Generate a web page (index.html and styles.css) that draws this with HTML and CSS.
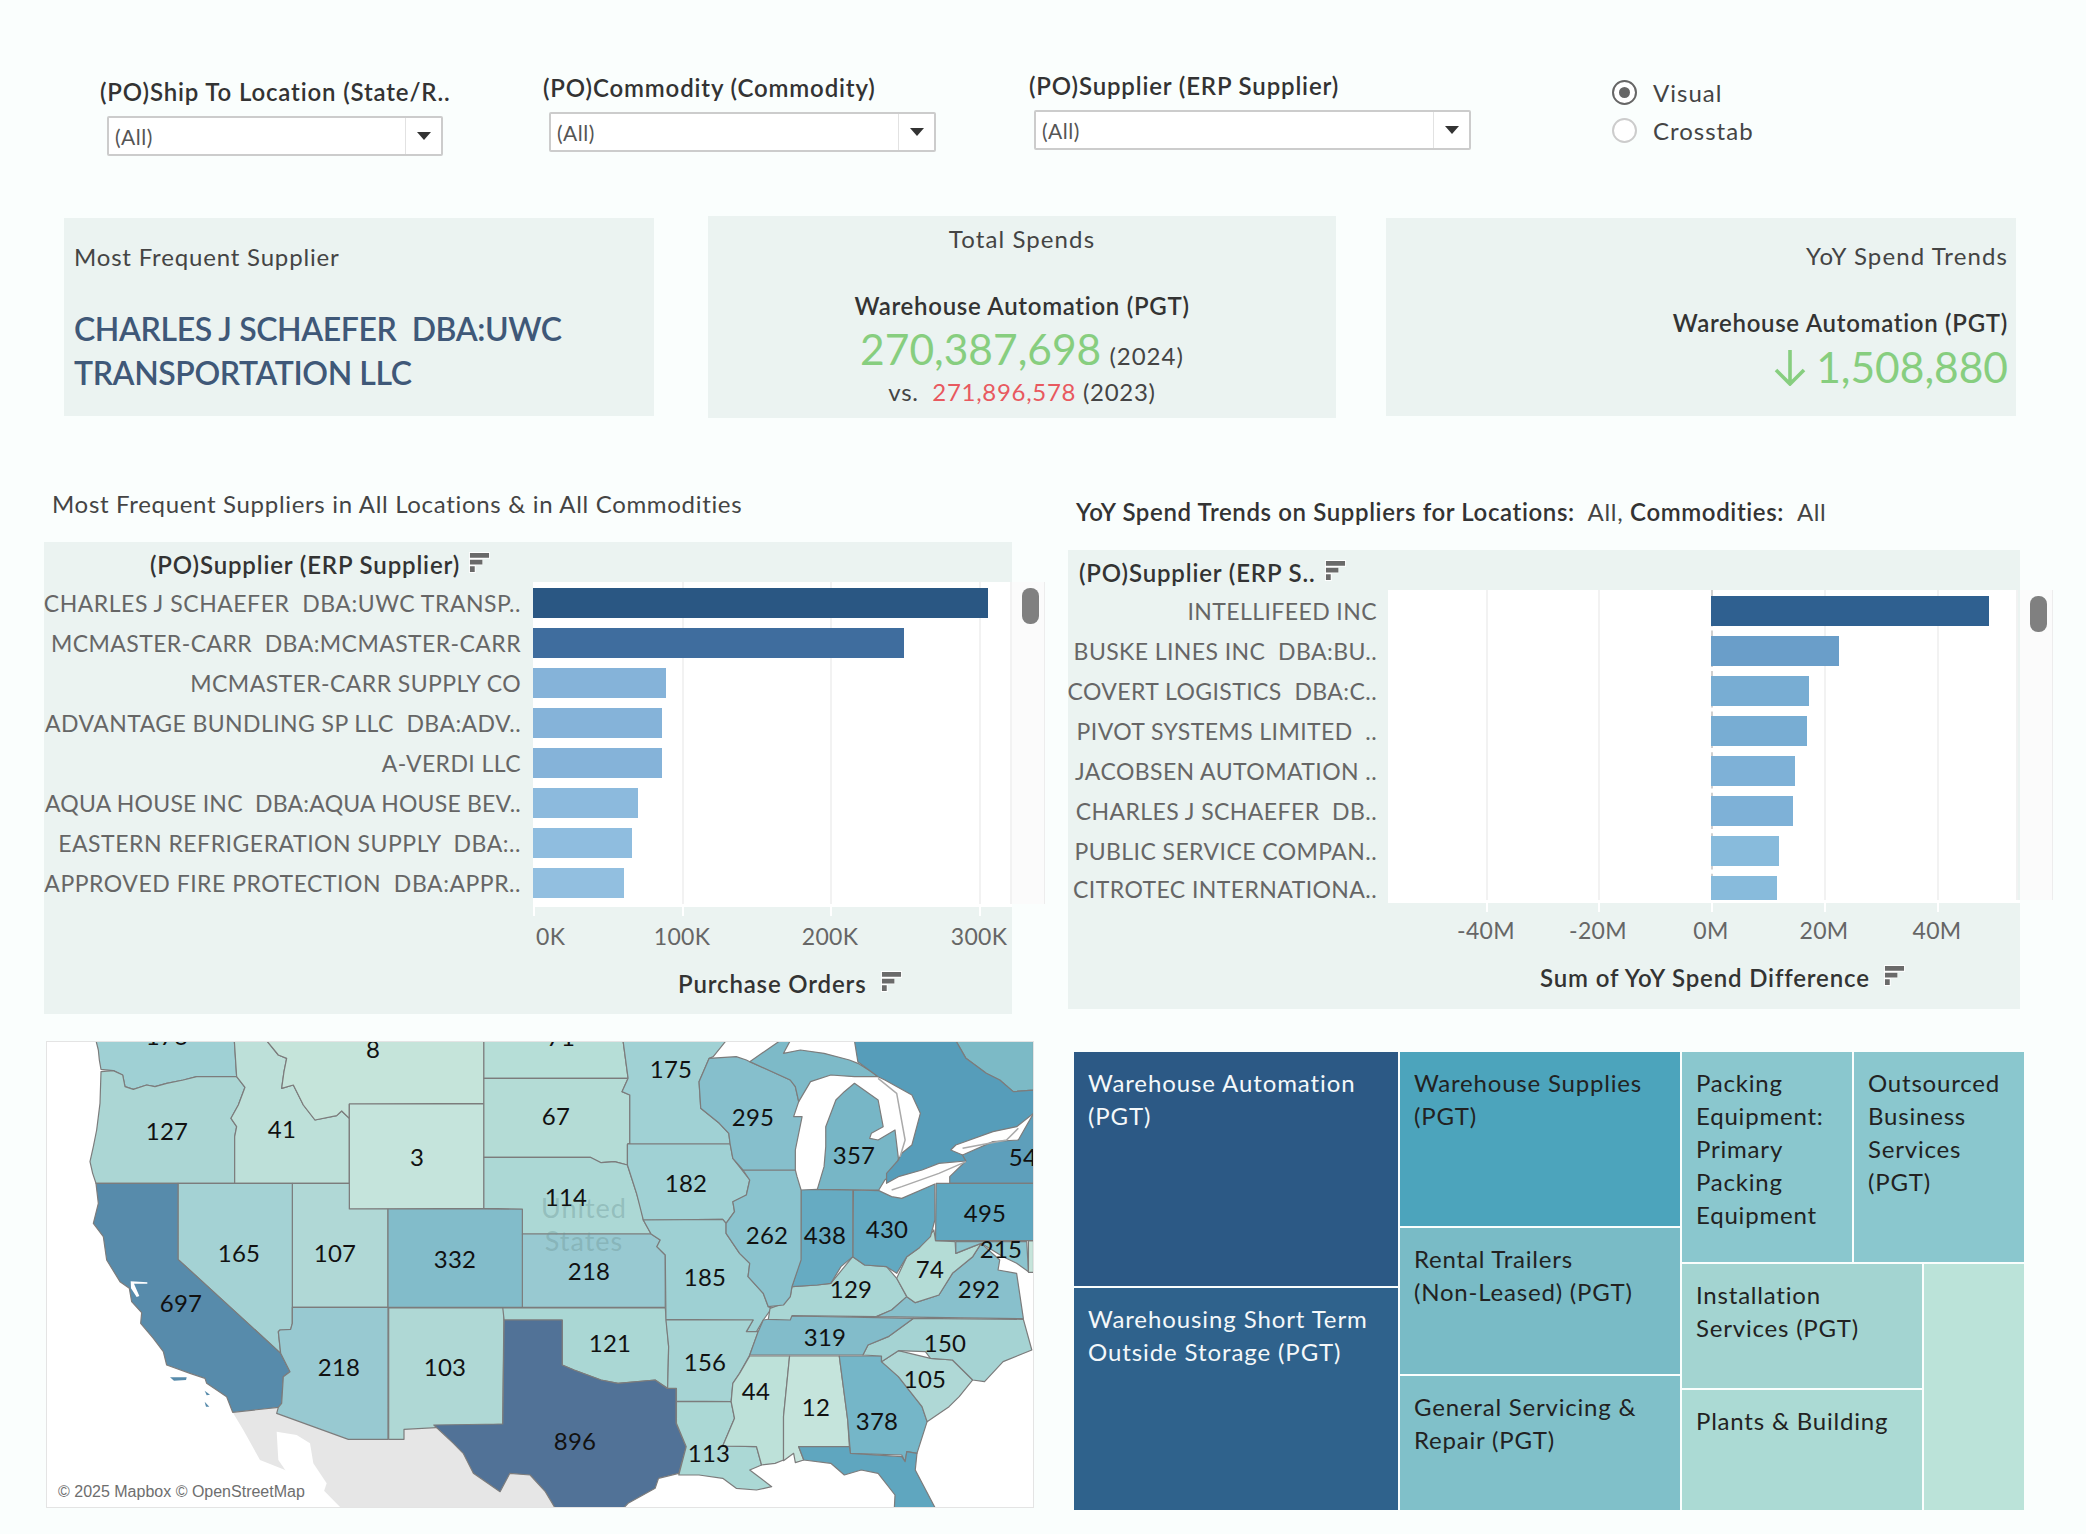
FILE: index.html
```html
<!DOCTYPE html>
<html lang="en">
<head>
<meta charset="utf-8">
<title>Purchase Order Dashboard</title>
<link rel="stylesheet" href="styles.css">
</head>
<body>
<div class="dash">
  <header class="filters">
    <div class="filter f-state">
      <div class="filter-label">(PO)Ship To Location (State/R..</div>
      <div class="select"><span class="select-value">(All)</span><span class="select-btn"><i class="caret"></i></span></div>
    </div>
    <div class="filter f-commodity">
      <div class="filter-label">(PO)Commodity (Commodity)</div>
      <div class="select"><span class="select-value">(All)</span><span class="select-btn"><i class="caret"></i></span></div>
    </div>
    <div class="filter f-supplier">
      <div class="filter-label">(PO)Supplier (ERP Supplier)</div>
      <div class="select"><span class="select-value">(All)</span><span class="select-btn"><i class="caret"></i></span></div>
    </div>
    <div class="radios">
      <div class="radio"><i class="dot on"></i><span>Visual</span></div>
      <div class="radio"><i class="dot"></i><span>Crosstab</span></div>
    </div>
  </header>

  <section class="kpis">
    <div class="kpi kpi-supplier">
      <div class="kpi-title">Most Frequent Supplier</div>
      <div class="supplier-name">CHARLES J SCHAEFER&nbsp; DBA:UWC<br>TRANSPORTATION LLC</div>
    </div>
    <div class="kpi kpi-total">
      <div class="kpi-title">Total Spends</div>
      <div class="kpi-sub">Warehouse Automation (PGT)</div>
      <div class="kpi-line"><span class="big">270,387,698</span> <span class="year">(2024)</span></div>
      <div class="kpi-vs">vs.&nbsp; <span class="red">271,896,578</span> (2023)</div>
    </div>
    <div class="kpi kpi-yoy">
      <div class="kpi-title">YoY Spend Trends</div>
      <div class="kpi-sub">Warehouse Automation (PGT)</div>
      <div class="kpi-line">
        <svg class="down" viewBox="0 0 32 37" aria-hidden="true"><path d="M16 1V35M2 21L16 35L30 21" fill="none" stroke="#87CE7F" stroke-width="3.6"/></svg>
        <span class="big">1,508,880</span>
      </div>
    </div>
  </section>

  <main class="board">
    <div class="col col-left">
      <h2 class="sheet-title title-left">Most Frequent Suppliers in All Locations &amp; in All Commodities</h2>
      <section class="chart chart-left">
        <div class="chart-head">
          <span class="field">(PO)Supplier (ERP Supplier)</span>
          <svg class="sort" viewBox="0 0 22 22" aria-hidden="true"><path d="M0 0H22V7H14V14H7V22H0Z" fill="#fff"/><path d="M1 1H21V6H1ZM1 8H14V13H1ZM1 15H6V21H1Z" fill="#6a6a6a"/></svg>
        </div>
        <div class="chart-body">
          <ul class="labels">
            <li class="wide">CHARLES J SCHAEFER&nbsp; DBA:UWC TRANSP..</li>
            <li>MCMASTER-CARR&nbsp; DBA:MCMASTER-CARR</li>
            <li>MCMASTER-CARR SUPPLY CO</li>
            <li>ADVANTAGE BUNDLING SP LLC&nbsp; DBA:ADV..</li>
            <li>A-VERDI LLC</li>
            <li class="tight">AQUA HOUSE INC&nbsp; DBA:AQUA HOUSE BEV..</li>
            <li class="wide">EASTERN REFRIGERATION SUPPLY&nbsp; DBA:..</li>
            <li class="wide">APPROVED FIRE PROTECTION&nbsp; DBA:APPR..</li>
          </ul>
          <div class="plot">
            <i class="grid" style="left:149px"></i><i class="grid" style="left:297px"></i><i class="grid" style="left:446px"></i><i class="grid edge"></i>
            <div class="bar" style="width:455px;background:#2A5783"></div>
            <div class="bar" style="width:371px;background:#3F6D9E"></div>
            <div class="bar" style="width:133px;background:#85B3D9"></div>
            <div class="bar" style="width:129px;background:#85B3D9"></div>
            <div class="bar" style="width:129px;background:#85B3D9"></div>
            <div class="bar" style="width:105px;background:#8CBADD"></div>
            <div class="bar" style="width:99px;background:#8FBDDF"></div>
            <div class="bar" style="width:91px;background:#92BFE0"></div>
          </div>
          <div class="scroll"><i class="thumb"></i></div>
        </div>
        <div class="axis">
          <i class="tick-mark" style="left:0"></i><i class="tick-mark" style="left:149px"></i><i class="tick-mark" style="left:297px"></i><i class="tick-mark" style="left:446px"></i>
          <span class="tick first">0K</span><span class="tick" style="left:149px">100K</span><span class="tick" style="left:297px">200K</span><span class="tick" style="left:446px">300K</span>
        </div>
        <div class="axis-title">
          <span class="field">Purchase Orders</span>
          <svg class="sort" viewBox="0 0 22 22" aria-hidden="true"><path d="M0 0H22V7H14V14H7V22H0Z" fill="#fff"/><path d="M1 1H21V6H1ZM1 8H14V13H1ZM1 15H6V21H1Z" fill="#6a6a6a"/></svg>
        </div>
      </section>

      <div class="map">
        <svg class="map-svg" viewBox="47 1042 986 465" aria-label="Map of the United States">
          <g class="west" transform="translate(30 1030) scale(.33333)">
            <polygon class="land" points="608,1147 745,1132 740,1150 955,1228 1122,1228 1122,1198 1212,1185 1576,1185 1576,1436 935,1436 880,1380 790,1330 690,1290 640,1200"/>
            <polygon class="gulf" points="740,1205 800,1215 840,1240 850,1300 890,1360 880,1390 935,1436 900,1436 800,1370 745,1290"/>
            <polygon fill="#9FD0D4" points="198,32 613,32 620,140 500,140 460,150 410,160 375,170 350,165 310,178 285,170 278,135 250,122 213,118 208,90 205,60"/>
            <polygon fill="#ABD6D4" points="213,125 250,122 278,135 285,170 310,178 350,165 375,170 410,160 460,150 500,140 620,140 645,172 625,225 603,265 620,290 614,320 614,460 198,460 188,430 180,395 190,350 200,300 210,220"/>
            <polygon fill="#BDE0D9" points="613,32 710,32 745,75 770,85 762,125 755,175 790,165 820,225 855,270 920,257 935,243 958,265 958,460 614,460 614,320 620,290 603,265 625,225 645,172 620,140"/>
            <polygon fill="#C5E4DA" points="710,32 1362,32 1362,220 958,222 958,265 935,243 920,257 855,270 820,225 790,165 755,175 762,125 770,85 745,75"/>
            <polygon fill="#C5E4DC" points="958,222 1362,222 1362,535 958,537"/>
            <polygon fill="#B0D8D6" points="787,460 958,460 958,537 1074,537 1074,832 787,832"/>
            <polygon fill="#A4D2D4" points="444,460 787,460 787,880 782,898 750,900 745,905 752,970 444,688"/>
            <polygon fill="#578BAB" points="198,460 444,460 444,688 752,970 780,1025 760,1040 755,1120 745,1132 608,1147 590,1100 530,1060 525,1045 480,1030 410,1005 400,965 370,925 332,880 335,848 305,815 298,775 270,755 230,690 220,620 190,580 205,520"/>
            <polygon class="gulf" points="302,754 352,757 352,761 312,761 328,798 320,801 303,775"/>
            <polygon class="isle" points="420,1042 470,1042 468,1050 432,1052"/>
            <polygon class="isle" points="524,1082 540,1094 530,1096"/>
            <polygon class="isle" points="524,1115 538,1130 528,1130"/>
            <polygon fill="#98C9D1" points="787,832 1074,832 1074,1228 955,1228 740,1150 745,1132 755,1120 760,1040 780,1025 752,970 745,905 750,900 782,898 787,880"/>
            <polygon fill="#AFD8D5" points="1076,834 1422,834 1418,1182 1122,1198 1122,1228 1076,1228"/>
            <polygon fill="#82BCCA" points="1074,537 1478,537 1478,832 1074,832"/>
          </g>
          <g class="east" transform="translate(520 1030) scale(.33784 .33333)">
            <polygon fill="#B6DED7" points="-107,32 305,32 320,145 -107,145"/>
            <polygon fill="#B4DCD6" points="-107,145 320,145 302,185 325,195 325,340 318,345 318,405 280,395 240,398 208,382 -107,382"/>
            <polygon fill="#ACD8D5" points="-107,382 208,382 240,398 280,395 318,405 345,490 360,540 365,570 388,612 7,612 7,537 -107,535"/>
            <polygon fill="#98C9D1" points="7,612 388,612 415,630 405,650 430,675 430,832 7,832"/>
            <polygon fill="#AAD7D4" points="-51,834 430,834 440,950 437,1075 400,1050 290,1060 240,1050 160,1020 125,1005 125,870 -47,870"/>
            <polygon fill="#517297" points="-47,870 125,870 125,1005 160,1020 240,1050 290,1060 400,1050 435,1075 462,1075 462,1180 492,1250 470,1330 410,1345 400,1375 320,1420 305,1436 105,1436 75,1385 30,1335 -30,1330 -59,1385 -138,1330 -168,1270 -197,1240 -255,1185 -51,1182"/>
            <polygon fill="#A0D1D4" points="305,32 610,32 572,80 560,85 530,155 535,235 590,280 618,310 622,342 318,342 325,340 325,195 302,185 320,145"/>
            <polygon fill="#A0D1D4" points="318,342 622,342 630,385 680,450 670,495 630,515 635,545 610,580 600,568 365,570 345,490 318,405"/>
            <polygon fill="#9ED0D3" points="365,570 600,568 610,580 610,610 650,670 680,700 675,740 720,790 735,830 745,835 720,870 700,905 670,905 690,870 432,868 430,675 405,650 415,630 388,612"/>
            <polygon fill="#A6D4D4" points="432,870 690,870 670,905 705,905 680,975 650,1030 630,1060 625,1115 463,1113 463,1075 437,1075 440,950"/>
            <polygon fill="#ABD8D5" points="463,1115 625,1115 635,1165 600,1248 700,1250 715,1305 680,1320 745,1370 700,1380 640,1375 600,1345 530,1335 470,1335 492,1250 463,1180"/>
            <polygon fill="#BDE1D9" points="680,978 798,978 780,1160 780,1290 755,1300 715,1305 700,1250 600,1248 635,1165 625,1115 630,1060 650,1030"/>
            <polygon fill="#C5E4DC" points="798,978 945,978 970,1170 975,1250 825,1250 840,1290 815,1298 810,1270 780,1292 780,1160"/>
            <polygon fill="#75B6C8" points="945,978 1070,978 1070,995 1120,1040 1190,1130 1205,1175 1175,1270 1145,1265 1140,1295 1130,1275 978,1270 970,1170"/>
            <polygon fill="#5FA6BF" points="825,1250 975,1250 978,1270 1130,1280 1140,1295 1145,1265 1175,1270 1170,1320 1230,1436 1108,1436 1110,1395 1060,1330 1010,1320 960,1335 920,1300 840,1290"/>
            <polygon fill="#AFD8D6" points="1070,995 1120,962 1215,985 1280,990 1340,1050 1300,1100 1270,1130 1205,1175 1190,1130 1120,1040"/>
            <polygon fill="#A5D3D3" points="1015,975 1030,945 1090,920 1165,865 1490,868 1515,960 1430,995 1375,1055 1340,1050 1280,990 1215,985 1200,965 1120,962 1070,995 1070,978"/>
            <polygon fill="#82BCCA" points="720,870 805,858 1165,865 1090,920 1030,945 1015,975 680,975 705,905"/>
            <polygon fill="#A9D6D4" points="740,835 780,820 800,800 805,770 880,765 920,760 985,680 1020,705 1085,710 1115,745 1145,800 1100,840 1055,860 805,857 800,870 735,868"/>
            <polygon fill="#88C0CC" points="1055,860 1100,840 1145,800 1170,818 1240,795 1280,730 1340,680 1365,640 1420,690 1415,720 1470,730 1490,866"/>
            <polygon fill="#B4DCD6" points="1115,745 1145,680 1180,655 1225,600 1230,632 1288,635 1290,670 1340,650 1365,640 1340,680 1280,730 1240,795 1170,818 1145,800"/>
            <polygon fill="#8CC4CE" points="1290,635 1500,635 1505,725 1470,700 1430,680 1365,640 1340,650 1290,670"/>
            <polygon fill="#C5E4DA" points="1505,632 1520,632 1520,727 1505,727"/>
            <polygon fill="#62A9C1" points="987,480 1062,482 1100,500 1130,505 1228,462 1228,570 1215,620 1180,655 1145,680 1115,730 1085,710 1020,705 985,680"/>
            <polygon fill="#66ABC2" points="832,480 880,478 985,480 985,680 950,710 920,760 880,765 805,770 830,690 832,560"/>
            <polygon fill="#8AC3CE" points="660,420 815,420 820,440 832,480 832,690 805,770 800,800 780,825 735,830 720,790 675,740 680,700 650,670 610,610 610,580 635,545 630,515 670,495 680,450"/>
            <polygon fill="#86BFCC" points="560,85 640,80 670,90 680,95 800,150 815,170 825,215 810,260 835,260 815,360 815,420 660,420 630,385 622,342 618,310 590,280 535,235 530,155"/>
            <polygon fill="#7DBAC8" points="680,95 770,32 800,32 780,70 830,60 900,70 975,90 1000,100 1040,125 1060,140 990,140 920,135 860,155 825,215 815,170 800,150"/>
            <polygon fill="#77B6C6" points="905,290 935,210 960,185 990,160 1060,210 1075,290 1040,310 1035,325 1060,330 1110,300 1120,385 1115,420 1080,450 1062,480 880,478 900,410 905,350"/>
            <polygon fill="#7CBAC6" points="1290,32 1520,32 1520,180 1460,185 1420,150 1380,130 1320,85"/>
            <polygon fill="#569DBA" points="990,32 1290,32 1320,85 1380,130 1420,150 1460,185 1520,180 1520,250 1470,290 1400,305 1290,345 1275,360 1310,375 1320,393 1240,400 1190,420 1120,440 1085,460 1085,430 1120,390 1130,370 1160,345 1185,250 1160,195 1080,150 1060,140 1040,125 1000,95"/>
            <polygon fill="#5E9FBB" points="1320,393 1310,375 1400,335 1475,330 1520,250 1520,460 1272,460 1272,440"/>
            <polygon fill="#5FA7C0" points="1232,460 1272,460 1520,460 1520,632 1230,632"/>
            <polyline class="lake-line" points="1060,145 1115,190 1140,330 1125,380"/>
            <polyline class="lake-line" points="1320,395 1240,430 1130,470 1100,480"/>
            <polyline class="lake-line" points="1310,355 1440,330 1475,295"/>
          </g>
          <g class="country">
            <text x="584" y="1218">United</text>
            <text x="584" y="1251">States</text>
          </g>
          <g class="state-values" transform="translate(0 1)">
            <text x="167" y="1044">176</text><text x="373" y="1057">8</text><text x="561" y="1045">71</text>
            <text x="167" y="1139">127</text><text x="282" y="1137">41</text><text x="417" y="1165">3</text>
            <text x="239" y="1261">165</text><text x="335" y="1261">107</text><text x="455" y="1267">332</text>
            <text x="181" y="1311">697</text><text x="339" y="1375">218</text><text x="445" y="1375">103</text>
            <text x="671" y="1077">175</text><text x="556" y="1124">67</text><text x="753" y="1125">295</text>
            <text x="854" y="1163">357</text><text x="1023" y="1165">54</text><text x="686" y="1191">182</text>
            <text x="566" y="1205">114</text><text x="985" y="1221">495</text><text x="887" y="1237">430</text>
            <text x="767" y="1243">262</text><text x="825" y="1243">438</text><text x="1001" y="1257">215</text>
            <text x="589" y="1279">218</text><text x="930" y="1277">74</text><text x="705" y="1285">185</text>
            <text x="851" y="1297">129</text><text x="979" y="1297">292</text><text x="825" y="1345">319</text>
            <text x="610" y="1351">121</text><text x="945" y="1351">150</text><text x="705" y="1370">156</text>
            <text x="925" y="1387">105</text><text x="756" y="1399">44</text><text x="816" y="1415">12</text>
            <text x="877" y="1429">378</text><text x="575" y="1449">896</text><text x="709" y="1461">113</text>
          </g>
        </svg>
        <div class="attribution">© 2025 Mapbox © OpenStreetMap</div>
      </div>
    </div>

    <div class="col col-right">
      <h2 class="sheet-title title-right"><b>YoY Spend Trends on Suppliers for Locations:</b>&nbsp; All, <b>Commodities:</b>&nbsp; All</h2>
      <section class="chart chart-right">
        <div class="chart-head">
          <span class="field">(PO)Supplier (ERP S..</span>
          <svg class="sort" viewBox="0 0 22 22" aria-hidden="true"><path d="M0 0H22V7H14V14H7V22H0Z" fill="#fff"/><path d="M1 1H21V6H1ZM1 8H14V13H1ZM1 15H6V21H1Z" fill="#6a6a6a"/></svg>
        </div>
        <div class="chart-body">
          <ul class="labels">
            <li>INTELLIFEED INC</li>
            <li>BUSKE LINES INC&nbsp; DBA:BU..</li>
            <li>COVERT LOGISTICS&nbsp; DBA:C..</li>
            <li>PIVOT SYSTEMS LIMITED&nbsp; ..</li>
            <li>JACOBSEN AUTOMATION ..</li>
            <li>CHARLES J SCHAEFER&nbsp; DB..</li>
            <li>PUBLIC SERVICE COMPAN..</li>
            <li>CITROTEC INTERNATIONA..</li>
          </ul>
          <div class="plot">
            <i class="grid" style="left:98px"></i><i class="grid" style="left:210px"></i><i class="grid zero" style="left:323px"></i><i class="grid" style="left:436px"></i><i class="grid" style="left:549px"></i><i class="grid edge"></i>
            <div class="bar" style="width:278px;background:#2F6090"></div>
            <div class="bar" style="width:128px;background:#6A9EC9"></div>
            <div class="bar" style="width:98px;background:#78ADD3"></div>
            <div class="bar" style="width:96px;background:#78ADD3"></div>
            <div class="bar" style="width:84px;background:#7EB1D7"></div>
            <div class="bar" style="width:82px;background:#7EB1D7"></div>
            <div class="bar" style="width:68px;background:#88BBDC"></div>
            <div class="bar" style="width:66px;background:#88BBDC"></div>
          </div>
          <div class="scroll"><i class="thumb"></i></div>
        </div>
        <div class="axis">
          <i class="tick-mark" style="left:98px"></i><i class="tick-mark" style="left:210px"></i><i class="tick-mark" style="left:323px"></i><i class="tick-mark" style="left:436px"></i><i class="tick-mark" style="left:549px"></i>
          <span class="tick" style="left:98px">-40M</span><span class="tick" style="left:210px">-20M</span><span class="tick" style="left:323px">0M</span><span class="tick" style="left:436px">20M</span><span class="tick" style="left:549px">40M</span>
        </div>
        <div class="axis-title">
          <span class="field">Sum of YoY Spend Difference</span>
          <svg class="sort" viewBox="0 0 22 22" aria-hidden="true"><path d="M0 0H22V7H14V14H7V22H0Z" fill="#fff"/><path d="M1 1H21V6H1ZM1 8H14V13H1ZM1 15H6V21H1Z" fill="#6a6a6a"/></svg>
        </div>
      </section>

      <div class="treemap">
        <div class="tm-col tm-a">
          <div class="cell light c1 h234">Warehouse Automation (PGT)</div>
          <div class="cell light c2 grow">Warehousing Short Term Outside Storage (PGT)</div>
        </div>
        <div class="tm-col tm-b">
          <div class="cell c3 h174">Warehouse Supplies (PGT)</div>
          <div class="cell c4 h146">Rental Trailers<br>(Non-Leased) (PGT)</div>
          <div class="cell c5 grow">General Servicing &amp; Repair (PGT)</div>
        </div>
        <div class="tm-col tm-c">
          <div class="tm-row h210">
            <div class="cell c6 w170">Packing Equipment: Primary Packing Equipment</div>
            <div class="cell c6 grow">Outsourced Business Services (PGT)</div>
          </div>
          <div class="tm-row grow">
            <div class="tm-col w240">
              <div class="cell c7 h124">Installation<br>Services (PGT)</div>
              <div class="cell c8 grow">Plants &amp; Building</div>
            </div>
            <div class="cell c9 grow"></div>
          </div>
        </div>
      </div>
    </div>
  </main>
</div>
</body>
</html>
```
FILE: styles.css
```css
* { box-sizing: border-box; }
html, body { margin: 0; padding: 0; }
body { background: #FAFEFD; font-family: Lato, "Noto Sans", sans-serif; color: #333; }
.dash { width: 2086px; height: 1534px; overflow: hidden; }

/* filters */
.filters { display: flex; align-items: flex-start; height: 216px; }
.filter-label { font-size: 24px; font-weight: 600; letter-spacing: .85px; line-height: 30px; color: #333; white-space: nowrap; }
.f-state { margin: 77px 0 0 100px; width: 343px; }
.f-commodity { margin: 73px 0 0 100px; width: 393px; }
.f-supplier { margin: 71px 0 0 93px; width: 442px; }
.filter-label + .select { margin-top: 9px; }
.f-state .select { margin-left: 7px; width: 336px; }
.f-commodity .select { margin-left: 6px; width: 387px; }
.f-supplier .select { margin-left: 5px; width: 437px; }
.select { display: flex; height: 40px; background: #fff; border: 2px solid #CCC; border-radius: 2px; align-items: center; }
.select-value { flex: 1; padding-left: 6px; font-size: 21px; letter-spacing: .5px; color: #555; }
.select-btn { width: 36px; height: 100%; border-left: 1px solid #E2E2E2; display: flex; align-items: center; justify-content: center; }
.caret { width: 0; height: 0; border-left: 7px solid transparent; border-right: 7px solid transparent; border-top: 8px solid #333; }
.radios { margin: 79px 0 0 141px; display: flex; flex-direction: column; gap: 12px; }
.radio { display: flex; align-items: center; gap: 16px; height: 26px; font-size: 24px; letter-spacing: 1px; color: #444; }
.dot { width: 25px; height: 25px; border-radius: 50%; border: 2px solid #CCC; background: #fff; display: flex; align-items: center; justify-content: center; }
.dot.on { border-color: #666; }
.dot.on::after { content: ""; width: 11px; height: 11px; border-radius: 50%; background: #666; }

/* kpi cards */
.kpis { display: flex; align-items: flex-start; height: 264px; padding-left: 64px; }
.kpi { background: #EBF3F1; }
.kpi-title { font-size: 24px; letter-spacing: .82px; color: #444; line-height: 30px; }
.kpi-total .kpi-title, .kpi-yoy .kpi-title { letter-spacing: 1.1px; }
.kpi-sub { font-size: 24px; font-weight: 600; letter-spacing: .7px; color: #333; line-height: 30px; }
.kpi-supplier { width: 590px; height: 198px; margin-top: 2px; padding: 24px 10px; }
.supplier-name { margin-top: 35px; font-size: 32px; letter-spacing: -.4px; line-height: 44px; font-weight: 600; color: #3F5878; }
.kpi-total { width: 628px; height: 202px; margin-left: 54px; padding-top: 8px; text-align: center; }
.kpi-total .kpi-sub { margin-top: 37px; }
.kpi-line { line-height: 56px; }
.big { font-size: 42.5px; color: #87CE7F; }
.year { font-size: 24px; letter-spacing: 1px; color: #444; margin-left: 4px; }
.kpi-vs { font-size: 24px; letter-spacing: .7px; color: #444; line-height: 30px; margin-top: -10px; }
.red { color: #E8595F; }
.kpi-yoy { width: 630px; height: 198px; margin: 2px 0 0 50px; padding: 23px 8px; text-align: right; }
.kpi-yoy .kpi-sub { margin-top: 37px; }
.kpi-yoy .kpi-line { display: flex; justify-content: flex-end; align-items: center; gap: 10px; height: 58px; }
.down { width: 32px; height: 37px; }

/* two chart columns */
.board { display: grid; grid-template-columns: 1024px 1018px; padding-left: 44px; }
.col { display: flex; flex-direction: column; }
.sheet-title { margin: 0; font-size: 24px; font-weight: 400; letter-spacing: .68px; line-height: 30px; color: #444; white-space: nowrap; }
.sheet-title b { font-weight: 600; letter-spacing: .62px; color: #333; }
.title-left { margin: 9px 0 23px 8px; }
.title-right { margin: 17px 0 23px 8px; }

.chart { background: #EBF3F1; }
.chart-left { width: 968px; height: 472px; }
.chart-right { width: 952px; height: 459px; }
.chart-head { height: 40px; padding-top: 4px; display: flex; align-items: center; gap: 9px; }
.chart-left .chart-head { padding-left: 106px; }
.chart-right .chart-head { padding-left: 11px; }
.field { font-size: 24px; font-weight: 600; letter-spacing: .85px; color: #333; white-space: nowrap; }
.sort { width: 21px; height: 21px; flex: none; margin-top: -4px; }

.chart-body { display: flex; height: 322px; }
.chart-right .chart-body { height: 310px; }
.labels { list-style: none; margin: 0; display: flex; flex-direction: column; gap: 10px; padding: 6px 12px 0 0; overflow: hidden; }
.chart-left .labels { width: 489px; }
.chart-right .labels { width: 320px; padding-right: 11px; }
.labels li { display: flex; justify-content: flex-end; height: 30px; line-height: 30px; font-size: 23px; letter-spacing: .42px; color: #666; white-space: nowrap; }
.labels li.wide { letter-spacing: .52px; }
.labels li.tight { letter-spacing: .22px; }
.chart-right .labels li:last-child { margin-top: -2px; }
.plot { position: relative; background: #fff; display: flex; flex-direction: column; gap: 10px; padding-top: 6px; overflow: hidden; }
.chart-left .plot { width: 479px; }
.chart-right .plot { width: 630px; }
.chart-right .bar { margin-left: 323px; }
.bar { height: 30px; flex: none; position: relative; }
.grid { position: absolute; top: 0; bottom: 0; width: 2px; background: #F2F2F2; }
.grid.edge { right: 0; }
.grid.zero { width: 0; background: none; border-left: 2px dashed #CFCFCF; }
.scroll { width: 33px; flex: none; background: #FBFBFB; border-right: 1px solid #EDEDED; padding: 6px 0 0 10px; }
.chart-left .scroll { margin-right: -33px; }
.chart-right .scroll { margin-left: 2px; margin-right: -33px; }
.thumb { display: block; width: 17px; height: 36px; border-radius: 8px; background: #808080; }

.axis { position: relative; height: 54px; border-top: 3px solid #fff; }
.chart-left .axis { margin-left: 489px; }
.chart-right .axis { margin-left: 320px; height: 52px; }
.tick { position: absolute; top: 14px; font-size: 23px; letter-spacing: .3px; line-height: 30px; color: #666; transform: translateX(-50%); white-space: nowrap; }
.chart-right .tick { top: 12px; }
.tick.first { left: 3px; transform: none; }
.tick-mark { position: absolute; top: 0; width: 2px; height: 9px; background: #fff; }
.axis-title { display: flex; align-items: center; gap: 14px; height: 40px; }
.chart-left .axis-title { padding-left: 634px; margin-top: 5px; }
.chart-right .axis-title { padding-left: 472px; margin-top: 5px; }

/* map */
.map { position: relative; width: 988px; height: 467px; margin: 27px 0 0 2px; background: #fff; border: 1px solid #E4E4E4; overflow: hidden; }
.map-svg { display: block; width: 986px; height: 465px; }
.map-svg polygon { stroke: #7C7C7C; stroke-width: 1.2; vector-effect: non-scaling-stroke; stroke-linejoin: round; }
.map-svg .land { fill: #E6E6E6; stroke: none; }
.map-svg .gulf { fill: #fff; stroke: none; }
.map-svg .isle { fill: #578BAB; stroke: none; }
.lake-line { fill: none; stroke: #AAA; stroke-width: 1.5; vector-effect: non-scaling-stroke; }
.state-values text { font-size: 24px; letter-spacing: .3px; text-anchor: middle; fill: #111; }
.country text { font-size: 27px; text-anchor: middle; fill: rgba(110, 150, 150, .4); letter-spacing: 1px; }
.attribution { position: absolute; left: 5px; bottom: 4px; height: 23px; padding: 0 6px; line-height: 23px; font-family: "Liberation Sans", sans-serif; font-size: 16px; color: #6E6E6E; background: rgba(255, 255, 255, .6); white-space: nowrap; }

/* treemap */
.treemap { display: flex; gap: 2px; width: 950px; height: 458px; margin: 43px 0 0 6px; }
.tm-col { display: flex; flex-direction: column; gap: 2px; }
.tm-row { display: flex; gap: 2px; }
.tm-a { width: 324px; }
.tm-b { width: 280px; }
.tm-c { flex: 1; }
.cell { padding: 14px; font-size: 24px; letter-spacing: .8px; line-height: 33px; color: #222; }
.cell.light { letter-spacing: .9px; color: #F4F8FA; }
.grow { flex: 1; }
.h234 { height: 234px; }
.h174 { height: 174px; }
.h146 { height: 146px; }
.h210 { height: 210px; }
.h124 { height: 124px; }
.w170 { width: 170px; }
.w240 { width: 240px; }
.c1 { background: #2C5985; }
.c2 { background: #2F628C; }
.c3 { background: #4CA4BC; }
.c4 { background: #79BBC6; }
.c5 { background: #80C0C9; }
.c6 { background: #8AC7CE; }
.c7 { background: #A3D4D1; }
.c8 { background: #ABDAD4; }
.c9 { background: #BBE3D9; }
```
